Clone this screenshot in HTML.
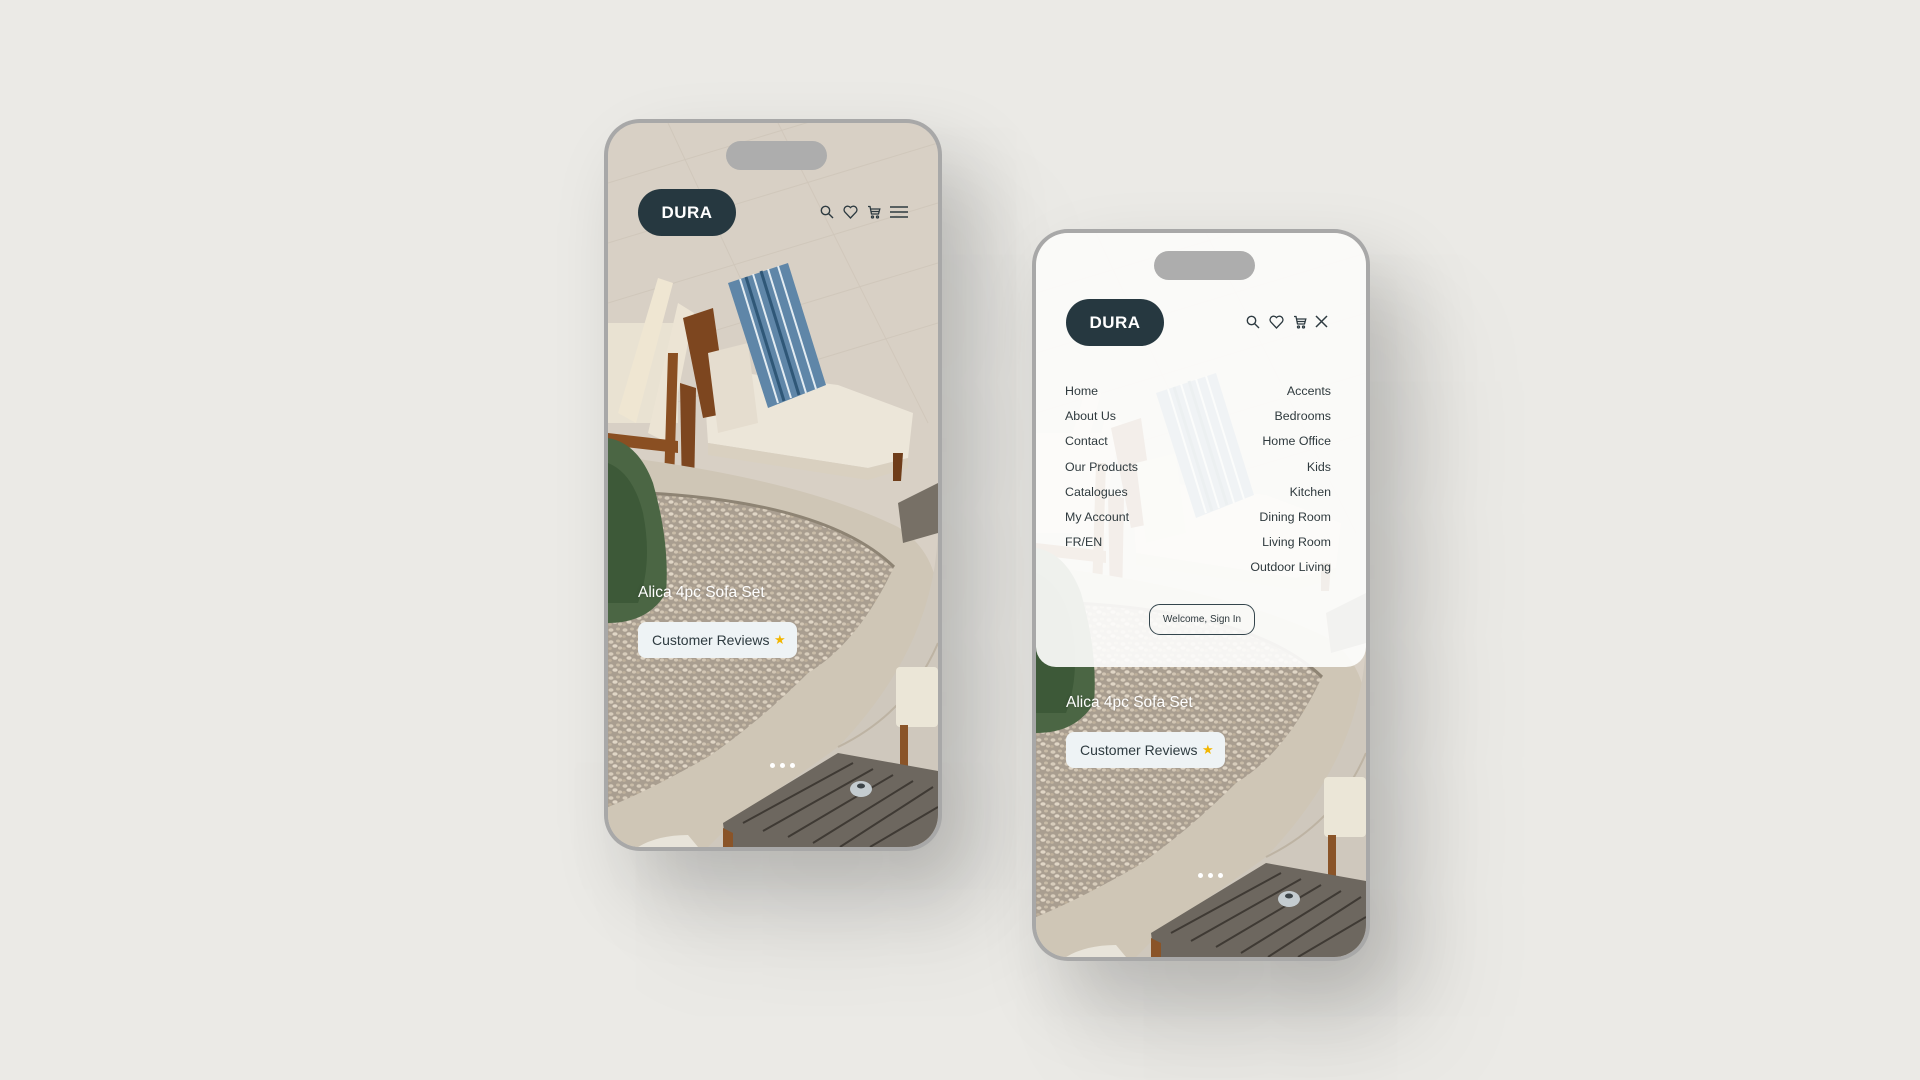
<!DOCTYPE html>
<html><head><meta charset="utf-8"><style>
html,body{margin:0;padding:0;width:1920px;height:1080px;overflow:hidden;background:#ebeae6;font-family:"Liberation Sans",sans-serif}
.phone{position:absolute;width:338px;height:732px;border-radius:36px;background:#a8a8a8;box-shadow:30px 40px 80px rgba(0,0,0,.18),60px 80px 120px rgba(0,0,0,.08)}
.scr{position:absolute;left:4px;top:4px;width:330px;height:724px;border-radius:32px;overflow:hidden}
.scr svg.bg{position:absolute;left:0;top:0}
.notch{position:absolute;left:118px;top:18px;width:101px;height:29px;border-radius:15px;background:#adadad}
.logo{position:absolute;left:30px;top:66px;width:98px;height:47px;border-radius:24px;background:#263840;color:#fff;font-weight:bold;font-size:17px;letter-spacing:.5px;text-align:center;line-height:48px}
.icons{position:absolute;top:82px;left:212px}
.icons svg{position:absolute;top:0}
.title{position:absolute;left:30px;top:461px;color:#fff;font-size:15.5px;text-shadow:0 0 3px rgba(0,0,0,.25)}
.btn{position:absolute;left:30px;top:499px;width:159px;height:36px;border-radius:8px;background:#eef3f5;color:#2e3b40;font-size:14px;line-height:36px;text-indent:14px}
.btn .st{position:absolute;left:136px;top:0;color:#f2b600;text-indent:0;font-size:13px}
.dots{position:absolute;left:162px;top:632px}
.dots i{display:inline-block;width:5px;height:5px;border-radius:50%;background:#fff;margin-right:5px}
.menu{position:absolute;left:0;top:0;width:330px;height:434px;background:rgba(253,253,252,.92);border-radius:0 0 20px 20px}
.menu .l,.menu .r{position:absolute;top:146px;font-size:12.4px;color:#2f3a3e;line-height:25.2px}
.menu .l{left:29px}.menu .r{right:35px;text-align:right}
.sign{position:absolute;left:113px;top:371px;width:106px;height:31px;border:1px solid #34454c;border-radius:11px;box-sizing:border-box;font-size:10px;text-align:center;line-height:29px;color:#2f3a3e}
</style></head><body>

<svg width="0" height="0" style="position:absolute"><defs>
<pattern id="gr" width="14" height="12" patternUnits="userSpaceOnUse">
<rect width="14" height="12" fill="#a99e90"/>
<ellipse cx="3" cy="3" rx="2.5" ry="1.8" fill="#d7ccbb"/><ellipse cx="10" cy="2" rx="2" ry="1.5" fill="#c9bca8"/>
<ellipse cx="7" cy="7" rx="2.6" ry="1.8" fill="#e0d6c6"/><ellipse cx="2" cy="9.5" rx="1.8" ry="1.4" fill="#bfb19c"/>
<ellipse cx="12" cy="9" rx="2" ry="1.6" fill="#d2c6b4"/></pattern>
<g id="img">
<rect width="330" height="724" fill="#d8d0c5"/>
<g stroke="#cbc2b5" stroke-width="1" opacity=".6">
<path d="M0 60 L330 -40 M0 120 L330 20 M0 180 L330 80 M0 240 L330 140 M0 300 L330 200 M60 0 L200 300 M170 0 L320 300"/></g>
<!-- back chair -->
<rect x="0" y="200" width="70" height="100" fill="#e9e2d2"/>
<path d="M10 290 L50 155 L65 160 L28 300Z" fill="#efe6d2"/>
<path d="M40 310 L70 180 L86 190 L60 320Z" fill="#ece4d4"/>
<path d="M60 230 L70 230 L66 360 L56 360Z" fill="#8a4f22"/>
<path d="M0 310 L70 318 L70 330 L0 322Z" fill="#8a4f22"/>
<!-- front chair -->
<path d="M95 245 L230 262 L305 290 L300 335 L260 345 L100 320Z" fill="#ece6d9"/>
<path d="M100 320 L260 345 L300 335 L300 345 L260 357 L100 332Z" fill="#d9d0c0"/>
<path d="M75 195 L105 185 L120 290 L95 295Z" fill="#7d461f"/>
<path d="M72 260 L88 265 L86 370 L74 370Z" fill="#7d461f"/>
<path d="M285 330 L295 330 L293 358 L285 358Z" fill="#6f3d1a"/>
<path d="M100 230 L140 220 L150 300 L110 310Z" fill="#e5ddcf"/>
<path d="M120 160 L180 140 L218 262 L160 285Z" fill="#5f86a8"/>
<g stroke="#e3ecf2" stroke-width="2"><path d="M132 156 L170 280 M145 151 L183 275 M160 146 L198 270 M170 143 L208 266"/></g>
<g stroke="#2f5777" stroke-width="3"><path d="M138 154 L176 278 M153 148 L191 272"/></g>
<!-- gravel and wall -->
<path d="M0 330 L37 337 Q200 360 290 404 Q330 430 330 480 L330 724 L0 724Z" fill="#cfc6b6"/>
<path d="M40 370 Q220 380 286 444 Q250 520 200 550 Q150 600 100 634 Q40 668 0 684 L0 370Z" fill="url(#gr)"/>
<path d="M40 370 Q220 380 286 444" fill="none" stroke="#8e8474" stroke-width="3"/>
<path d="M330 400 Q330 520 230 624 Q180 660 130 694 L100 724 L330 724Z" fill="#cfc8bd"/>
<path d="M330 520 Q300 590 230 624" fill="none" stroke="#bdb3a3" stroke-width="2"/>
<!-- bush -->
<path d="M0 315 Q30 320 45 360 Q62 420 58 470 Q40 500 0 500Z" fill="#4b6644"/>
<path d="M0 340 Q25 350 35 390 Q45 440 30 480 L0 480Z" fill="#3d5938"/>
<!-- right chairs -->
<rect x="288" y="544" width="42" height="60" fill="#ebe6d7" rx="4"/>
<rect x="292" y="602" width="8" height="48" fill="#8a5428"/>
<path d="M290 380 L330 360 L330 410 L295 420Z" fill="#777066"/>
<!-- deck -->
<path d="M115 700 L230 630 L330 648 L330 724 L118 724Z" fill="#6d675f"/>
<g stroke="#3f3a34" stroke-width="2"><path d="M135 700 L245 640 M155 708 L265 646 M180 714 L285 652 M205 720 L305 658 M232 724 L325 664 M262 724 L330 684"/></g>
<path d="M115 705 L115 724 L125 724 L125 710Z" fill="#8a5428"/>
<ellipse cx="253" cy="666" rx="11" ry="8" fill="#c4ccd0"/><ellipse cx="253" cy="663" rx="4" ry="2.5" fill="#3c4448"/>
<path d="M30 724 Q50 712 80 712 L90 724Z" fill="#e8e4da"/>
</g></defs></svg>

<!-- Phone 1 -->
<div class="phone" style="left:604px;top:119px">
<div class="scr">
<svg class="bg" width="330" height="724"><use href="#img"/></svg>
<div class="notch"></div>
<div class="logo">DURA</div>
<div class="icons">
<svg style="left:0" width="14" height="14" viewBox="0 0 14 14" fill="none" stroke="#2d3a40" stroke-width="1.4"><circle cx="5.5" cy="5.5" r="4.2"/><path d="M8.6 8.6 L13 13"/></svg>
<svg style="left:23px" width="15" height="14" viewBox="0 0 15 14" fill="none" stroke="#2d3a40" stroke-width="1.3"><path d="M7.5 13 L1.8 7 A3.3 3.3 0 0 1 7.5 2.6 A3.3 3.3 0 0 1 13.2 7Z"/></svg>
<svg style="left:47px" width="14" height="14" viewBox="0 0 14 14" fill="none" stroke="#2d3a40" stroke-width="1.3"><path d="M1 1.5 H3 L4.5 9 H11.5 L12.8 4 H3.6 M4 6.5 H12"/><circle cx="5.5" cy="12" r="1"/><circle cx="10.5" cy="12" r="1"/></svg>
<svg style="left:70px;top:1px" width="18" height="12" viewBox="0 0 18 12" stroke="#2d3a40" stroke-width="1.5"><path d="M0 1H18M0 6H18M0 11H18"/></svg>
</div>
<div class="title">Alica 4pc Sofa Set</div>
<div class="btn">Customer Reviews<span class="st">★</span></div>
<div class="dots"><i></i><i></i><i></i></div>
</div></div>

<!-- Phone 2 -->
<div class="phone" style="left:1032px;top:229px">
<div class="scr">
<svg class="bg" width="330" height="724"><use href="#img"/></svg>
<div class="menu">
<div class="l">Home<br>About Us<br>Contact<br>Our Products<br>Catalogues<br>My Account<br>FR/EN</div>
<div class="r">Accents<br>Bedrooms<br>Home Office<br>Kids<br>Kitchen<br>Dining Room<br>Living Room<br>Outdoor Living</div>
<div class="sign">Welcome, Sign In</div>
</div>
<div class="notch"></div>
<div class="logo">DURA</div>
<div class="icons" style="left:210px">
<svg style="left:0" width="14" height="14" viewBox="0 0 14 14" fill="none" stroke="#2d3a40" stroke-width="1.4"><circle cx="5.5" cy="5.5" r="4.2"/><path d="M8.6 8.6 L13 13"/></svg>
<svg style="left:23px" width="15" height="14" viewBox="0 0 15 14" fill="none" stroke="#2d3a40" stroke-width="1.3"><path d="M7.5 13 L1.8 7 A3.3 3.3 0 0 1 7.5 2.6 A3.3 3.3 0 0 1 13.2 7Z"/></svg>
<svg style="left:47px" width="14" height="14" viewBox="0 0 14 14" fill="none" stroke="#2d3a40" stroke-width="1.3"><path d="M1 1.5 H3 L4.5 9 H11.5 L12.8 4 H3.6 M4 6.5 H12"/><circle cx="5.5" cy="12" r="1"/><circle cx="10.5" cy="12" r="1"/></svg>
<svg style="left:69px" width="13" height="13" viewBox="0 0 13 13" stroke="#2d3a40" stroke-width="1.5"><path d="M1 1L12 12M12 1L1 12"/></svg>
</div>
<div class="title">Alica 4pc Sofa Set</div>
<div class="btn">Customer Reviews<span class="st">★</span></div>
<div class="dots"><i></i><i></i><i></i></div>
</div></div>
</body></html>
